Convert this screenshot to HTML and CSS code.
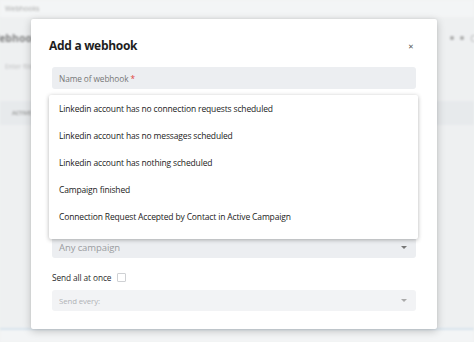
FILE: index.html
```html
<!DOCTYPE html>
<html>
<head>
<meta charset="utf-8">
<link rel="stylesheet" href="styles.css">
</head>
<body>
<div class="page">
  <div class="topbar"><span class="crumb">Webhooks</span></div>
  <div class="page-body">
    <div class="page-head">
      <h1 class="page-title">Webhooks</h1>
      <div class="page-tools"><span class="dot"></span><span class="dot"></span><span class="tool-c">C</span></div>
    </div>
    <div class="filter">Enter filter</div>
    <div class="table-head"><span class="th">ACTIVE</span></div>
    <div class="page-bottom"></div>
  </div>
</div>
<div class="overlay"></div>

<div class="modal">
  <div class="modal-head">
    <h2 class="modal-title">Add a webhook</h2>
    <span class="close">&#x2715;</span>
  </div>
  <div class="form">
    <div class="input name">Name of webhook <span class="req">*</span></div>
    <div class="input"></div>
    <div class="input"></div>
    <div class="input area"></div>
    <div class="input select campaign"><span>Any campaign</span><span class="caret"></span></div>
    <div class="check-row"><span class="check-label">Send all at once</span><span class="checkbox"></span></div>
    <div class="input select every"><span>Send every:</span><span class="caret light"></span></div>
  </div>
  <ul class="menu">
    <li>Linkedin account has no connection requests scheduled</li>
    <li>Linkedin account has no messages scheduled</li>
    <li>Linkedin account has nothing scheduled</li>
    <li>Campaign finished</li>
    <li>Connection Request Accepted by Contact in Active Campaign</li>
  </ul>
</div>
</body>
</html>
```

FILE: styles.css
```css
* { box-sizing: border-box; }
html, body {
  margin: 0;
  padding: 0;
  width: 474px;
  height: 342px;
  overflow: hidden;
  font-family: "Open Sans", "Noto Sans", sans-serif;
  background: #f1f2f4;
}
.page {
  width: 474px;
  height: 342px;
  filter: blur(0.8px);
  display: flex;
  flex-direction: column;
}
.topbar {
  height: 17px;
  background: #f7f8f9;
  padding: 0 0 0 5px;
  display: flex;
  align-items: center;
}
.crumb { font-size: 7px; color: #888; }
.page-body {
  flex: 1;
  display: flex;
  flex-direction: column;
  background: #f0f1f3;
}
.page-head {
  display: flex;
  justify-content: space-between;
  align-items: center;
  height: 40px;
  padding-top: 2px;
}
.page-title {
  margin: 0 0 0 -11px;
  font-size: 10.5px;
  font-weight: 700;
  color: #555;
}
.page-tools { display: flex; align-items: center; gap: 6px; margin-right: -2px; }
.dot { width: 4px; height: 4px; border-radius: 50%; background: #888; }
.tool-c { font-size: 9px; color: #999; }
.filter { font-size: 6.5px; color: #aaa; padding-left: 5px; height: 30px; padding-top: 5px; }
.table-head {
  margin-top: 14px;
  height: 24px;
  background: #e6e8eb;
  display: flex;
  align-items: center;
  padding-left: 12px;
}
.th { font-size: 5.5px; font-weight: 700; color: #777; }
.page-bottom {
  margin-top: auto;
  height: 14px;
  border-top: 2px solid #cfdfec;
  background: #f7f8f9;
}
.overlay {
  position: absolute;
  inset: 0;
  background: rgba(235, 237, 240, 0.3);
}

.modal {
  position: absolute;
  left: 31px;
  top: 19px;
  width: 406px;
  height: 310px;
  background: #fff;
  border-radius: 2px;
  box-shadow: 0 2px 8px rgba(0, 0, 0, 0.22), 0 0 2px rgba(0,0,0,0.08);
  padding: 18px 18px 0 18px;
}
.modal-head {
  display: flex;
  justify-content: space-between;
  align-items: center;
  height: 18px;
}
.modal-title {
  margin: 0;
  font-size: 12px;
  letter-spacing: -0.3px;
  font-weight: 700;
  color: #1e1e1e;
  line-height: 18px;
}
.close {
  font-size: 7px;
  color: #555;
  margin-right: 5px;
}
.form {
  margin-top: 12px;
  padding: 0 3px;
  display: flex;
  flex-direction: column;
  gap: 8px;
}
.input {
  height: 22px;
  background: #eceef1;
  border-radius: 3px;
  padding: 0 7px;
  display: flex;
  align-items: center;
  font-size: 8.3px;
  letter-spacing: -0.1px;
  color: #777;
}
.req { color: #e0433c; margin-left: 2px; }
.area { height: 71px; }
.select { justify-content: space-between; }
.campaign { font-size: 9.5px; color: #9a9ca0; }
.every { font-size: 7.8px; color: #b0b2b5; background: #f2f3f5; height: 21px; margin-top: -4px; }
.caret {
  width: 0; height: 0;
  border-left: 3px solid transparent;
  border-right: 3px solid transparent;
  border-top: 3px solid #777;
  margin-right: 2px;
}
.caret.light { border-top-color: #aaa; }
.check-row {
  height: 18px;
  margin-top: 2px;
  display: flex;
  align-items: center;
  gap: 6px;
}
.check-label { font-size: 8.3px; letter-spacing: -0.1px; color: #2a2a2a; }
.checkbox {
  width: 9px;
  height: 9px;
  border: 1px solid #cfd1d4;
  border-radius: 1px;
  background: #fff;
}

.menu {
  position: absolute;
  left: 18px;
  top: 76px;
  width: 369px;
  height: 144px;
  margin: 0;
  padding: 0 0 9px 0;
  list-style: none;
  background: #fff;
  border-radius: 2px;
  box-shadow: 0 1px 4px rgba(0, 0, 0, 0.3);
}
.menu li {
  height: 27px;
  display: flex;
  align-items: center;
  padding-left: 10px;
  font-size: 8.5px;
  letter-spacing: -0.15px;
  color: #222;
}
```
